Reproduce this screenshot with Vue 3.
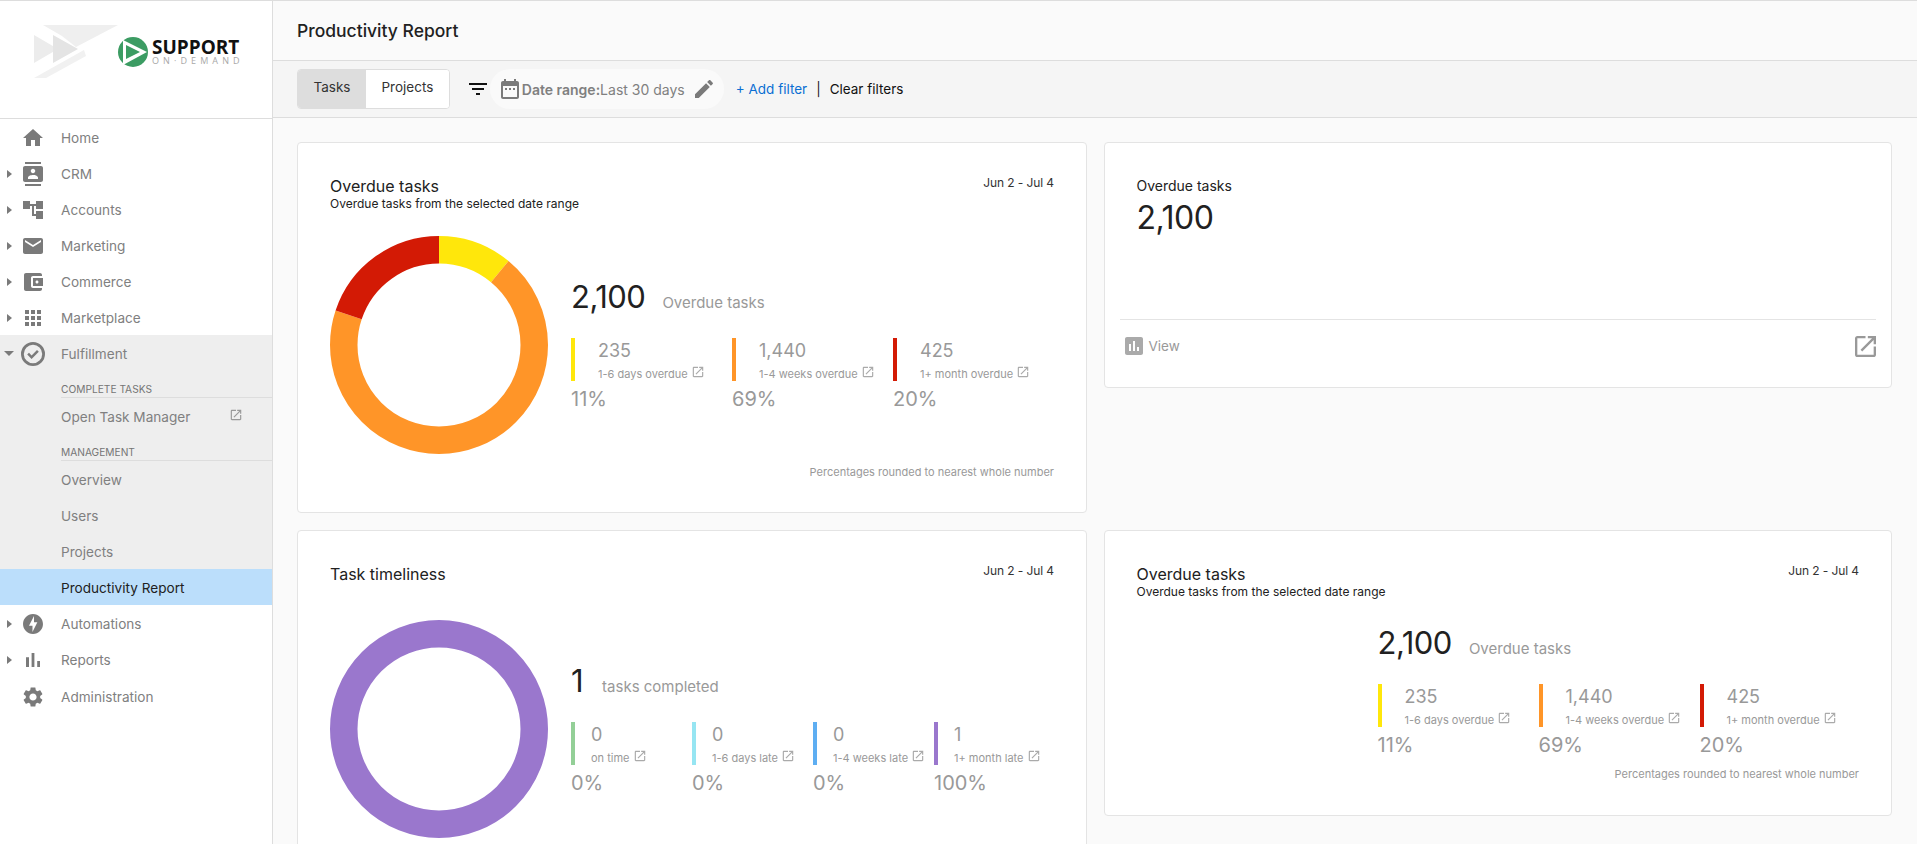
<script setup>
const openIcon = 'M19 19H5V5h7V3H5c-1.11 0-2 .9-2 2v14c0 1.1.89 2 2 2h14c1.1 0 2-.9 2-2v-7h-2v7zM14 3v2h3.59l-9.83 9.83 1.41 1.41L19 6.41V10h2V3h-7z'

const topNav = [
  { label: 'Home', d: 'M10 20v-6h4v6h5v-8h3L12 3 2 12h3v8z' },
  { label: 'CRM', caret: true, d: 'M20 0H4v2h16V0zM4 24h16v-2H4v2zM20 4H4c-1.1 0-2 .9-2 2v12c0 1.1.9 2 2 2h16c1.1 0 2-.9 2-2V6c0-1.1-.9-2-2-2zm-8 2.75c1.24 0 2.25 1.01 2.25 2.25s-1.01 2.25-2.25 2.25S9.75 10.24 9.75 9 10.76 6.75 12 6.75zM17 17H7v-1.5c0-1.67 3.33-2.5 5-2.5s5 .83 5 2.5V17z' },
  { label: 'Accounts', caret: true, d: 'M22 11V3h-7v3H9V3H2v8h7V8h2v10h4v3h7v-8h-7v3h-2V8h2v3z' },
  { label: 'Marketing', caret: true, d: 'M20 4H4c-1.1 0-1.99.9-1.99 2L2 18c0 1.1.9 2 2 2h16c1.1 0 2-.9 2-2V6c0-1.1-.9-2-2-2zm0 4l-8 5-8-5V6l8 5 8-5v2z' },
  { label: 'Commerce', caret: true, d: 'M21 18v1c0 1.1-.9 2-2 2H5c-1.11 0-2-.9-2-2V5c0-1.1.89-2 2-2h14c1.1 0 2 .9 2 2v1h-9c-1.11 0-2 .9-2 2v8c0 1.1.89 2 2 2h9zm-9-2h10V8H12v8zm4-2.5c-.83 0-1.5-.67-1.5-1.5s.67-1.5 1.5-1.5 1.5.67 1.5 1.5-.67 1.5-1.5 1.5z' },
  { label: 'Marketplace', caret: true, d: 'M4 8h4V4H4v4zm6 12h4v-4h-4v4zm-6 0h4v-4H4v4zm0-6h4v-4H4v4zm6 0h4v-4h-4v4zm6-10v4h4V4h-4zm-6 4h4V4h-4v4zm6 6h4v-4h-4v4zm0 6h4v-4h-4v4z' }
]

const bottomNav = [
  { label: 'Automations', caret: true, d: 'M12 2.02c-5.51 0-9.98 4.47-9.98 9.98s4.47 9.98 9.98 9.98 9.98-4.47 9.98-9.98S17.51 2.02 12 2.02zM11.48 20v-6.26H8L13 4v6.26h3.35L11.48 20z' },
  { label: 'Reports', caret: true, d: 'M5 9.2h3V19H5zM10.6 5h2.8v14h-2.8zm5.6 8H19v6h-2.8z' },
  { label: 'Administration', d: 'M19.14 12.94c.04-.3.06-.61.06-.94 0-.32-.02-.64-.07-.94l2.03-1.58c.18-.14.23-.41.12-.61l-1.92-3.32c-.12-.22-.37-.29-.59-.22l-2.39.96c-.5-.38-1.03-.7-1.62-.94l-.36-2.54c-.04-.24-.24-.41-.48-.41h-3.84c-.24 0-.43.17-.47.41l-.36 2.54c-.59.24-1.13.57-1.62.94l-2.39-.96c-.22-.08-.47 0-.59.22L2.74 8.87c-.12.21-.08.47.12.61l2.03 1.58c-.05.3-.09.63-.09.94s.02.64.07.94l-2.03 1.58c-.18.14-.23.41-.12.61l1.92 3.32c.12.22.37.29.59.22l2.39-.96c.5.38 1.03.7 1.62.94l.36 2.54c.05.24.24.41.48.41h3.84c.24 0 .44-.17.47-.41l.36-2.54c.59-.24 1.13-.56 1.62-.94l2.39.96c.22.08.47 0 .59-.22l1.92-3.32c.12-.22.07-.47-.12-.61l-2.01-1.58zM12 15.6c-1.98 0-3.6-1.62-3.6-3.6s1.62-3.6 3.6-3.6 3.6 1.62 3.6 3.6-1.62 3.6-3.6 3.6z' }
]

const overdueStats = [
  { value: '235', label: '1-6 days overdue', pct: '11%', color: '#ffe70b' },
  { value: '1,440', label: '1-4 weeks overdue', pct: '69%', color: '#ff9528' },
  { value: '425', label: '1+ month overdue', pct: '20%', color: '#d31a05' }
]

const timelinessStats = [
  { value: '0', label: 'on time', pct: '0%', color: '#93cf97' },
  { value: '0', label: '1-6 days late', pct: '0%', color: '#96e5f2' },
  { value: '0', label: '1-4 weeks late', pct: '0%', color: '#5eaef2' },
  { value: '1', label: '1+ month late', pct: '100%', color: '#9a77cd' }
]

// donut segments, share of the ring in percent
const radius = 95.25
const circumference = 2 * Math.PI * radius
const dash = (pct, offset) => ({
  strokeDasharray: `${(pct / 100) * circumference} ${circumference}`,
  strokeDashoffset: `${-(offset / 100) * circumference}`
})
</script>

<template>
  <div class="app">
    <aside class="sidebar">
      <div class="brand">
        <svg class="brand-mark" width="84" height="53" viewBox="0 0 84 53">
          <path d="M9 0h75L42 22 28 11z" fill="#efefef" />
          <path d="M0 10l24 14L0 38z" fill="#ececec" />
          <path d="M19 10l25 14-25 14z" fill="#e4e4e4" />
          <path d="M0 53l50-28 2 6-40 22z" fill="#f1f1f1" />
        </svg>
        <svg class="brand-play" width="30" height="30" viewBox="0 0 30 30">
          <circle cx="15" cy="15" r="15" fill="#3c9c63" />
          <path d="M5 3l24 12L5 28z" fill="#fff" />
          <path d="M8 8l14 7-14 7z" fill="#3c9c63" />
        </svg>
        <div class="brand-text">
          <div class="brand-name">SUPPORT</div>
          <div class="brand-sub">ON·DEMAND</div>
        </div>
      </div>
      <nav>
        <div v-for="item in topNav" :key="item.label" class="nav-row">
          <span class="caret-slot"><i v-if="item.caret" class="caret"></i></span>
          <svg class="nav-icon" viewBox="0 0 24 24"><path :d="item.d" /></svg>
          <span>{{ item.label }}</span>
        </div>

        <div class="group">
          <div class="nav-row">
            <span class="caret-slot"><i class="caret-down"></i></span>
            <svg class="nav-icon" viewBox="0 0 24 24">
              <path fill-rule="evenodd" d="M12 0a12 12 0 1 0 0 24a12 12 0 1 0 0-24zM12 2.8a9.2 9.2 0 1 1 0 18.4a9.2 9.2 0 1 1 0-18.4z" />
              <path d="M10.6 17 6.2 12.6 8 10.8l2.6 2.6 5.4-5.4 1.8 1.8z" />
            </svg>
            <span>Fulfillment</span>
          </div>
          <div class="sub-head">Complete tasks</div>
          <div class="sub-row">
            <span>Open Task Manager</span>
            <svg class="sub-open" viewBox="0 0 24 24"><path :d="openIcon" /></svg>
          </div>
          <div class="sub-head">Management</div>
          <div class="sub-row">Overview</div>
          <div class="sub-row">Users</div>
          <div class="sub-row">Projects</div>
          <div class="sub-row active">Productivity Report</div>
        </div>

        <div v-for="item in bottomNav" :key="item.label" class="nav-row">
          <span class="caret-slot"><i v-if="item.caret" class="caret"></i></span>
          <svg class="nav-icon" viewBox="0 0 24 24"><path :d="item.d" /></svg>
          <span>{{ item.label }}</span>
        </div>
      </nav>
    </aside>

    <main class="main">
      <header class="page-head">Productivity Report</header>

      <div class="toolbar">
        <div class="tabs">
          <button class="tab selected">Tasks</button>
          <button class="tab">Projects</button>
        </div>
        <svg class="filter-icon" viewBox="0 0 24 24"><path d="M10 18h4v-2h-4v2zM3 6v2h18V6H3zm3 7h12v-2H6v2z" /></svg>
        <div class="pill">
          <svg class="pill-icon" viewBox="0 0 24 24"><path d="M9 11H7v2h2v-2zm4 0h-2v2h2v-2zm4 0h-2v2h2v-2zm2-7h-1V2h-2v2H8V2H6v2H5c-1.11 0-1.99.9-1.99 2L3 20c0 1.1.89 2 2 2h14c1.1 0 2-.9 2-2V6c0-1.1-.9-2-2-2zm0 16H5V9h14v11z" /></svg>
          <span class="pill-text"><b>Date range:</b>Last 30 days</span>
          <svg class="pill-icon edit" viewBox="0 0 24 24"><path d="M3 17.25V21h3.75L17.81 9.94l-3.75-3.75L3 17.25zM20.71 7.04c.39-.39.39-1.02 0-1.41l-2.34-2.34c-.39-.39-1.02-.39-1.41 0l-1.83 1.83 3.75 3.75 1.83-1.83z" /></svg>
        </div>
        <a class="add-filter">+ Add filter</a>
        <span class="sep">|</span>
        <a class="clear-filter">Clear filters</a>
      </div>

      <div class="content">
        <section class="card">
          <div class="card-head">
            <div>
              <div class="card-title">Overdue tasks</div>
              <div class="card-sub">Overdue tasks from the selected date range</div>
            </div>
            <div class="card-date">Jun 2 - Jul 4</div>
          </div>
          <div class="card-body">
            <svg class="donut" viewBox="0 0 218 218">
              <g transform="rotate(-90 109 109)" fill="none" stroke-width="27.5">
                <circle cx="109" cy="109" :r="radius" stroke="#ffe70b" :style="dash(11, 0)" />
                <circle cx="109" cy="109" :r="radius" stroke="#ff9528" :style="dash(69, 11)" />
                <circle cx="109" cy="109" :r="radius" stroke="#d31a05" :style="dash(20, 80)" />
              </g>
            </svg>
            <div class="stats">
              <div class="total"><span class="total-num">2,100</span><span class="total-label">Overdue tasks</span></div>
              <div class="stat-row">
                <div v-for="s in overdueStats" :key="s.label" class="stat">
                  <div class="stat-main" :style="{ borderColor: s.color }">
                    <div class="stat-num">{{ s.value }}</div>
                    <div class="stat-label">{{ s.label }}<svg class="mini-open" viewBox="0 0 24 24"><path :d="openIcon" /></svg></div>
                  </div>
                  <div class="stat-pct">{{ s.pct }}</div>
                </div>
              </div>
            </div>
          </div>
          <div class="footnote">Percentages rounded to nearest whole number</div>
        </section>

        <section class="card card-small">
          <div class="small-top">
            <div class="small-title">Overdue tasks</div>
            <div class="small-num">2,100</div>
          </div>
          <div class="small-foot">
            <div class="view">
              <svg class="view-icon" viewBox="0 0 24 24"><path d="M19 3H5c-1.1 0-2 .9-2 2v14c0 1.1.9 2 2 2h14c1.1 0 2-.9 2-2V5c0-1.1-.9-2-2-2zM9 17H7v-7h2v7zm4 0h-2V7h2v10zm4 0h-2v-4h2v4z" /></svg>
              <span>View</span>
            </div>
            <svg class="foot-open" viewBox="3 3 18 18"><path :d="openIcon" /></svg>
          </div>
        </section>

        <section class="card">
          <div class="card-head no-sub">
            <div class="card-title">Task timeliness</div>
            <div class="card-date">Jun 2 - Jul 4</div>
          </div>
          <div class="card-body">
            <svg class="donut" viewBox="0 0 218 218">
              <circle cx="109" cy="109" :r="radius" fill="none" stroke="#9a77cd" stroke-width="27.5" />
            </svg>
            <div class="stats">
              <div class="total"><span class="total-num">1</span><span class="total-label near">tasks completed</span></div>
              <div class="stat-row four">
                <div v-for="s in timelinessStats" :key="s.label" class="stat">
                  <div class="stat-main" :style="{ borderColor: s.color }">
                    <div class="stat-num">{{ s.value }}</div>
                    <div class="stat-label">{{ s.label }}<svg class="mini-open" viewBox="0 0 24 24"><path :d="openIcon" /></svg></div>
                  </div>
                  <div class="stat-pct">{{ s.pct }}</div>
                </div>
              </div>
            </div>
          </div>
        </section>

        <section class="card card-nochart">
          <div class="card-head">
            <div>
              <div class="card-title">Overdue tasks</div>
              <div class="card-sub">Overdue tasks from the selected date range</div>
            </div>
            <div class="card-date">Jun 2 - Jul 4</div>
          </div>
          <div class="card-body">
            <div class="donut-space"></div>
            <div class="stats">
              <div class="total"><span class="total-num">2,100</span><span class="total-label">Overdue tasks</span></div>
              <div class="stat-row">
                <div v-for="s in overdueStats" :key="s.label" class="stat">
                  <div class="stat-main" :style="{ borderColor: s.color }">
                    <div class="stat-num">{{ s.value }}</div>
                    <div class="stat-label">{{ s.label }}<svg class="mini-open" viewBox="0 0 24 24"><path :d="openIcon" /></svg></div>
                  </div>
                  <div class="stat-pct">{{ s.pct }}</div>
                </div>
              </div>
            </div>
          </div>
          <div class="footnote">Percentages rounded to nearest whole number</div>
        </section>
      </div>
    </main>
  </div>
</template>

<style>
html,
body {
  margin: 0;
  background: #fafafa;
}
</style>

<style scoped>
.app {
  display: flex;
  height: 100vh;
  overflow: hidden;
  border-top: 1px solid #ddd;
  box-sizing: border-box;
  font-family: Inter, "Liberation Sans", sans-serif;
  font-size: 14px;
  color: #212121;
}

.sidebar {
  width: 272px;
  flex-shrink: 0;
  background: #fff;
  border-right: 1px solid #ddd;
}

.brand {
  border-bottom: 1px solid #ddd;
  display: flex;
  align-items: flex-start;
  padding: 24px 0 0 34px;
  height: 93px;
}

.brand-play {
  margin: 12px 0 0 0;
}

.brand-text {
  margin: 13px 0 0 4px;
  width: 90px;
}

.brand-name {
  font-family: "Open Sans", sans-serif;
  font-weight: 700;
  font-size: 19px;
  line-height: 18px;
  color: #111;
}

.brand-sub {
  font-family: "Open Sans", sans-serif;
  font-size: 9px;
  line-height: 10px;
  letter-spacing: 4.1px;
  color: #a8a8a8;
  white-space: nowrap;
}

.nav-row {
  height: 36px;
  box-sizing: border-box;
  padding-top: 1px;
  display: flex;
  align-items: center;
  font-size: 13.6px;
  color: #808080;
}

.caret-slot {
  width: 21px;
  flex-shrink: 0;
  display: flex;
  align-items: center;
}

.caret {
  margin-left: 7px;
  border-left: 5px solid #7a7a7a;
  border-top: 4.5px solid transparent;
  border-bottom: 4.5px solid transparent;
}

.caret-down {
  margin-left: 4px;
  border-top: 5px solid #7a7a7a;
  border-left: 5px solid transparent;
  border-right: 5px solid transparent;
}

.nav-icon {
  width: 24px;
  height: 24px;
  margin-right: 16px;
  fill: #7a7a7a;
  flex-shrink: 0;
}

.nav-row:last-child {
  margin-top: 1px;
}

.group {
  background: #eee;
}

.sub-head {
  margin-left: 61px;
  height: 26px;
  border-bottom: 1px solid #ddd;
  font-size: 10.2px;
  line-height: 37px;
  text-transform: uppercase;
  color: #757575;
}

.sub-row {
  height: 36px;
  box-sizing: border-box;
  padding: 1px 0 0 61px;
  display: flex;
  align-items: center;
  font-size: 13.6px;
  color: #808080;
}

.sub-open {
  width: 14px;
  height: 14px;
  margin-left: auto;
  margin-right: 29px;
  margin-top: -3px;
  fill: #999;
}

.sub-row.active {
  background: #bbdefb;
  color: #212121;
}

.main {
  flex: 1;
  min-width: 0;
  background: #fafafa;
}

.page-head {
  height: 59px;
  border-bottom: 1px solid #ddd;
  display: flex;
  align-items: center;
  padding-left: 24px;
  font-size: 17.5px;
  font-weight: 500;
  background: #fafafa;
}

.toolbar {
  height: 56px;
  border-bottom: 1px solid #ddd;
  background: #f5f5f5;
  display: flex;
  align-items: center;
  padding-left: 24px;
  font-size: 13.5px;
}

.tabs {
  display: flex;
  height: 40px;
  border: 1px solid #ddd;
  border-radius: 4px;
  box-sizing: border-box;
  overflow: hidden;
  background: #fff;
}

.tab {
  border: 0;
  background: #fff;
  font: inherit;
  font-size: 13.5px;
  color: #333;
  padding: 0 15.5px 4px;
}

.tab.selected {
  background: #ddd;
}

.filter-icon {
  width: 24px;
  height: 24px;
  margin-left: 16px;
  fill: #111;
  flex-shrink: 0;
}

.pill {
  height: 40px;
  width: 234px;
  box-sizing: border-box;
  border-radius: 20px;
  background: #fafafa;
  display: flex;
  align-items: center;
  padding-left: 8px;
  color: #808080;
  font-size: 14px;
}

.pill-icon {
  width: 24px;
  height: 24px;
  fill: #7a7a7a;
  flex-shrink: 0;
}

.pill-text {
  white-space: nowrap;
}

.pill-text b {
  font-weight: 600;
}

.edit {
  margin-left: 7px;
}

.add-filter {
  margin-left: 12px;
  color: #0b6fd3;
}

.sep {
  margin: 0 9px;
}

.clear-filter {
  color: #111;
}

.content {
  display: grid;
  grid-template-columns: 790px 1fr;
  gap: 17px 16.5px;
  padding: 24px 25px 0 24px;
  align-items: start;
}

.card {
  background: #fff;
  border: 1px solid #e4e4e4;
  border-radius: 4px;
  padding: 32px;
  box-sizing: border-box;
  min-width: 0;
}

.card-head {
  display: flex;
  justify-content: space-between;
  align-items: flex-start;
  margin-bottom: 25px;
}

.card-head.no-sub {
  margin-bottom: 35px;
}

.card-title {
  font-size: 16px;
  line-height: 22px;
  color: #212121;
}

.card-sub {
  font-size: 12px;
  line-height: 14px;
  color: #212121;
}

.card-date {
  font-size: 12px;
  line-height: 16px;
  color: #333;
  letter-spacing: -0.1px;
}

.card-body {
  display: flex;
  align-items: center;
}

.card-nochart .card-body {
  align-items: flex-start;
}

.donut,
.donut-space {
  width: 218px;
  height: 218px;
  flex-shrink: 0;
  margin-right: 23px;
  display: block;
}

.donut-space {
  height: 0;
}

.total {
  display: flex;
  align-items: baseline;
  height: 40px;
  line-height: 40px;
  margin-bottom: 21px;
}

.total-num {
  font-size: 31px;
  letter-spacing: -0.5px;
}

.total-label {
  font-size: 15px;
  color: #999;
  margin-left: 17px;
}

.total-label.near {
  margin-left: 19px;
}

.stat-row {
  display: flex;
}

.stat {
  width: 161px;
  flex-shrink: 0;
}

.four .stat {
  width: 121px;
}

.stat-main {
  height: 43px;
  border-left: 4px solid;
  padding-left: 23px;
  box-sizing: border-box;
  white-space: nowrap;
}

.four .stat-main {
  padding-left: 16px;
}

.stat-num {
  font-size: 18px;
  line-height: 24px;
  padding-top: 1px;
  color: #999;
}

.stat-label {
  display: flex;
  align-items: center;
  font-size: 11px;
  line-height: 16px;
  margin-top: 3px;
  color: #999;
}

.mini-open {
  width: 14px;
  height: 14px;
  fill: #aaa;
  margin: -4px 0 0 3px;
  flex-shrink: 0;
}

.stat-pct {
  font-size: 20px;
  line-height: 28px;
  margin-top: 4px;
  color: #999;
}

.footnote {
  margin-top: 10px;
  text-align: right;
  font-size: 11px;
  line-height: 16px;
  color: #999;
}

.card-nochart .card-head {
  margin-bottom: 24px;
}

.card-nochart .footnote {
  margin-top: 7px;
}

.card-nochart {
  padding-bottom: 33px;
}

.card-small {
  padding: 0 15px;
  height: 246px;
}

.small-top {
  height: 177px;
  padding: 33px 0 0 17px;
  box-sizing: border-box;
  border-bottom: 1px solid #e4e4e4;
}

.small-title {
  font-size: 14px;
  line-height: 20px;
}

.small-num {
  font-size: 32px;
  line-height: 44px;
  letter-spacing: -0.5px;
}

.small-foot {
  display: flex;
  justify-content: space-between;
  align-items: center;
  padding-top: 14px;
}

.view {
  display: flex;
  align-items: center;
  color: #999;
  font-size: 13.5px;
  padding-left: 2px;
}

.view-icon {
  width: 24px;
  height: 24px;
  fill: #aaa;
  margin-right: 3px;
}

.foot-open {
  width: 21px;
  height: 21px;
  fill: #999;
}
</style>
